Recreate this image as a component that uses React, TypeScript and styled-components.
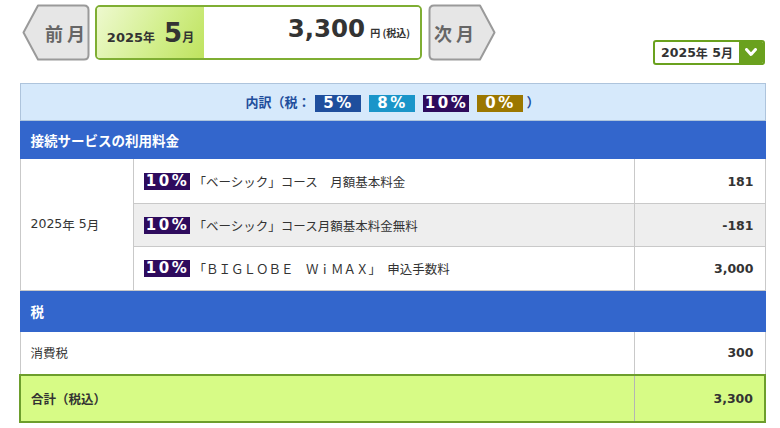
import React from "react";
import styled, { createGlobalStyle } from "styled-components";

const GlobalStyle = createGlobalStyle`
  html, body { margin: 0; padding: 0; background: #fff; }
  body {
    font-family: "DejaVu Sans", "Noto Sans CJK JP", sans-serif;
    color: #333;
  }
`;

const Page = styled.div`
  width: 746px;
  margin-left: 19px;
`;

const TopBar = styled.div`
  display: flex;
  align-items: flex-start;
  height: 83px;
  box-sizing: border-box;
  padding-top: 4px;
`;

const NavButton = styled.button<{ $dir: "prev" | "next" }>`
  position: relative;
  width: 68px;
  height: 57px;
  margin: ${(p) => (p.$dir === "prev" ? "0 5px 0 3px" : "0 0 0 6px")};
  padding: ${(p) => (p.$dir === "prev" ? "0 0 0 18px" : "0 16px 0 0")};
  border: none;
  background: transparent;
  display: flex;
  align-items: center;
  justify-content: center;
  font-family: "Noto Sans CJK JP", sans-serif;
  font-size: 18px;
  font-weight: 700;
  color: #666;
  letter-spacing: 4px;
  cursor: pointer;
  svg {
    position: absolute;
    inset: 0;
  }
  span {
    position: relative;
    margin-left: 4px;
  }
`;

const MonthBox = styled.div`
  width: 327px;
  height: 55px;
  box-sizing: border-box;
  margin-top: 1px;
  border: 2px solid #7fae33;
  border-radius: 5px;
  display: flex;
  overflow: hidden;
`;

const MonthLabel = styled.div`
  width: 107px;
  background: linear-gradient(120deg, #eef9cf 0%, #d3ef8e 55%, #bfe35f 100%);
  display: flex;
  align-items: baseline;
  justify-content: center;
  padding-top: 11px;
  box-sizing: border-box;
  font-weight: 700;
  color: #333;
`;

const Small = styled.span`
  font-size: 12px;
  font-family: "Noto Sans CJK JP", sans-serif;
`;

const Year = styled.span`
  font-size: 13px;
`;

const BigNum = styled.span`
  font-size: 26px;
  margin-left: 9px;
`;

const TotalArea = styled.div`
  flex: 1;
  background: #fff;
  display: flex;
  align-items: baseline;
  justify-content: flex-end;
  padding: 7px 10px 0 0;
  font-weight: 700;
`;

const TotalNum = styled.span`
  font-size: 24.5px;
  color: #333;
  margin-right: 5px;
`;

const TotalUnit = styled.span`
  font-size: 10px;
  font-family: "Noto Sans CJK JP", sans-serif;
  color: #333;
`;

const Spacer = styled.div`
  flex: 1;
`;

const Dropdown = styled.div`
  margin-top: 36px;
  height: 25px;
  width: 112px;
  box-sizing: border-box;
  border: 2px solid #6aa11e;
  border-radius: 3px;
  display: flex;
  align-items: stretch;
  overflow: hidden;
  background: #fff;
`;

const DropText = styled.div`
  flex: 1;
  display: flex;
  align-items: center;
  justify-content: center;
  font-size: 12.5px;
  font-weight: 700;
  color: #333;
`;

const DropArrow = styled.div`
  width: 24px;
  background: #6aa11e;
  display: flex;
  align-items: center;
  justify-content: center;
`;

const Table = styled.table`
  width: 745px;
  border-collapse: collapse;
  table-layout: fixed;
  font-size: 12.5px;
  color: #333;
`;

const BreakdownCell = styled.td`
  height: 36px;
  padding: 0;
  background: #d6e9fb;
  border: 1px solid #aec4dc;
  text-align: center;
  font-weight: 700;
  color: #1f4e9c;
  font-size: 13px;
  font-family: "Noto Sans CJK JP", sans-serif;
`;

const badgeColors: Record<string, string> = {
  "5": "#1f4f9d",
  "8": "#1a95c9",
  "10": "#2e0b5d",
  "0": "#9b7700",
};

const Badge = styled.span<{ $tone: string }>`
  display: inline-block;
  width: 46px;
  height: 17px;
  line-height: 17px;
  vertical-align: middle;
  margin: 0 4px;
  background: ${(p) => badgeColors[p.$tone]};
  color: #fff;
  font-family: "DejaVu Sans", sans-serif;
  font-size: 15px;
  font-weight: 700;
  letter-spacing: 2.5px;
  text-indent: 2px;
  text-align: center;
`;

const SectionHead = styled.td<{ $h: number }>`
  height: ${(p) => p.$h}px;
  padding: 0 0 0 10px;
  background: #3366cc;
  border: 1px solid #3366cc;
  color: #fff;
  font-weight: 700;
  font-size: 13.5px;
  font-family: "Noto Sans CJK JP", sans-serif;
`;

const Cell = styled.td<{ $alt?: boolean; $h?: number }>`
  height: ${(p) => p.$h ?? 43}px;
  padding: 0 10px;
  border: 1px solid #c9c9c9;
  background: ${(p) => (p.$alt ? "#eeeeee" : "#fff")};
  box-sizing: border-box;
  white-space: nowrap;
`;

const DescText = styled.span`
  font-family: "Noto Sans CJK JP", sans-serif;
  vertical-align: middle;
`;

const Amount = styled(Cell)`
  text-align: right;
  font-weight: 700;
  padding-right: 11px;
`;

const TotalCell = styled.td<{ $edge?: "left" | "right" }>`
  height: 45px;
  padding: 0 11px 0 10px;
  background: #d7fb86;
  border-top: 2px solid #6d9e2c;
  border-bottom: 2px solid #6d9e2c;
  border-left: ${(p) => (p.$edge === "left" ? "2px solid #6d9e2c" : "1px solid #b5b5b5")};
  border-right: ${(p) => (p.$edge === "right" ? "2px solid #6d9e2c" : "1px solid #b5b5b5")};
  font-weight: 700;
  text-align: ${(p) => (p.$edge === "right" ? "right" : "left")};
`;

const PrevShape = () => (
  <svg width="68" height="57" viewBox="0 0 68 57">
    <path
      d="M16 1.5 H62 Q66.5 1.5 66.5 6 V51 Q66.5 55.5 62 55.5 H16 L1.5 28.5 Z"
      fill="#e6e6e6"
      stroke="#9a9a9a"
      strokeWidth="2"
      strokeLinejoin="round"
    />
  </svg>
);

const NextShape = () => (
  <svg width="68" height="57" viewBox="0 0 68 57">
    <path
      d="M52 1.5 H6 Q1.5 1.5 1.5 6 V51 Q1.5 55.5 6 55.5 H52 L66.5 28.5 Z"
      fill="#e6e6e6"
      stroke="#9a9a9a"
      strokeWidth="2"
      strokeLinejoin="round"
    />
  </svg>
);

const items = [
  { text: "「ベーシック」コース　月額基本料金", amount: "181", alt: false, h: 45 },
  { text: "「ベーシック」コース月額基本料金無料", amount: "-181", alt: true, h: 43 },
  { text: "「ＢＩＧＬＯＢＥ　ＷｉＭＡＸ」　申込手数料", amount: "3,000", alt: false, h: 44 },
];

export default function App() {
  return (
    <>
      <GlobalStyle />
      <Page>
        <TopBar>
          <NavButton $dir="prev">
            <PrevShape />
            <span>前月</span>
          </NavButton>
          <MonthBox>
            <MonthLabel>
              <Year>2025</Year>
              <Small>年</Small>
              <BigNum>5</BigNum>
              <Small>月</Small>
            </MonthLabel>
            <TotalArea>
              <TotalNum>3,300</TotalNum>
              <TotalUnit>円 (税込)</TotalUnit>
            </TotalArea>
          </MonthBox>
          <NavButton $dir="next">
            <NextShape />
            <span>次月</span>
          </NavButton>
          <Spacer />
          <Dropdown>
            <DropText>
              2025<Small>年</Small>&nbsp;5<Small>月</Small>
            </DropText>
            <DropArrow>
              <svg width="12" height="9" viewBox="0 0 12 9">
                <path d="M1.5 1.5 L6 6.5 L10.5 1.5" fill="none" stroke="#fff" strokeWidth="3" strokeLinecap="round" strokeLinejoin="round" />
              </svg>
            </DropArrow>
          </Dropdown>
        </TopBar>
        <Table>
          <colgroup>
            <col style={{ width: 113 }} />
            <col style={{ width: 501 }} />
            <col style={{ width: 131 }} />
          </colgroup>
          <tbody>
            <tr>
              <BreakdownCell colSpan={3}>
                内訳（税：
                <Badge $tone="5">5%</Badge>
                <Badge $tone="8">8%</Badge>
                <Badge $tone="10">10%</Badge>
                <Badge $tone="0">0%</Badge>）
              </BreakdownCell>
            </tr>
            <tr>
              <SectionHead colSpan={3} $h={37}>接続サービスの利用料金</SectionHead>
            </tr>
            {items.map((it, i) => (
              <tr key={i}>
                {i === 0 && (
                  <Cell rowSpan={3}>
                    2025<DescText>年</DescText> 5<DescText>月</DescText>
                  </Cell>
                )}
                <Cell $alt={it.alt} $h={it.h}>
                  <Badge $tone="10" style={{ marginLeft: 0 }}>10%</Badge>
                  <DescText>{it.text}</DescText>
                </Cell>
                <Amount $alt={it.alt} $h={it.h}>{it.amount}</Amount>
              </tr>
            ))}
            <tr>
              <SectionHead colSpan={3} $h={40}>税</SectionHead>
            </tr>
            <tr>
              <Cell colSpan={2}>
                <DescText>消費税</DescText>
              </Cell>
              <Amount>300</Amount>
            </tr>
            <tr>
              <TotalCell colSpan={2} $edge="left">
                <DescText>合計（税込）</DescText>
              </TotalCell>
              <TotalCell $edge="right">3,300</TotalCell>
            </tr>
          </tbody>
        </Table>
      </Page>
    </>
  );
}
